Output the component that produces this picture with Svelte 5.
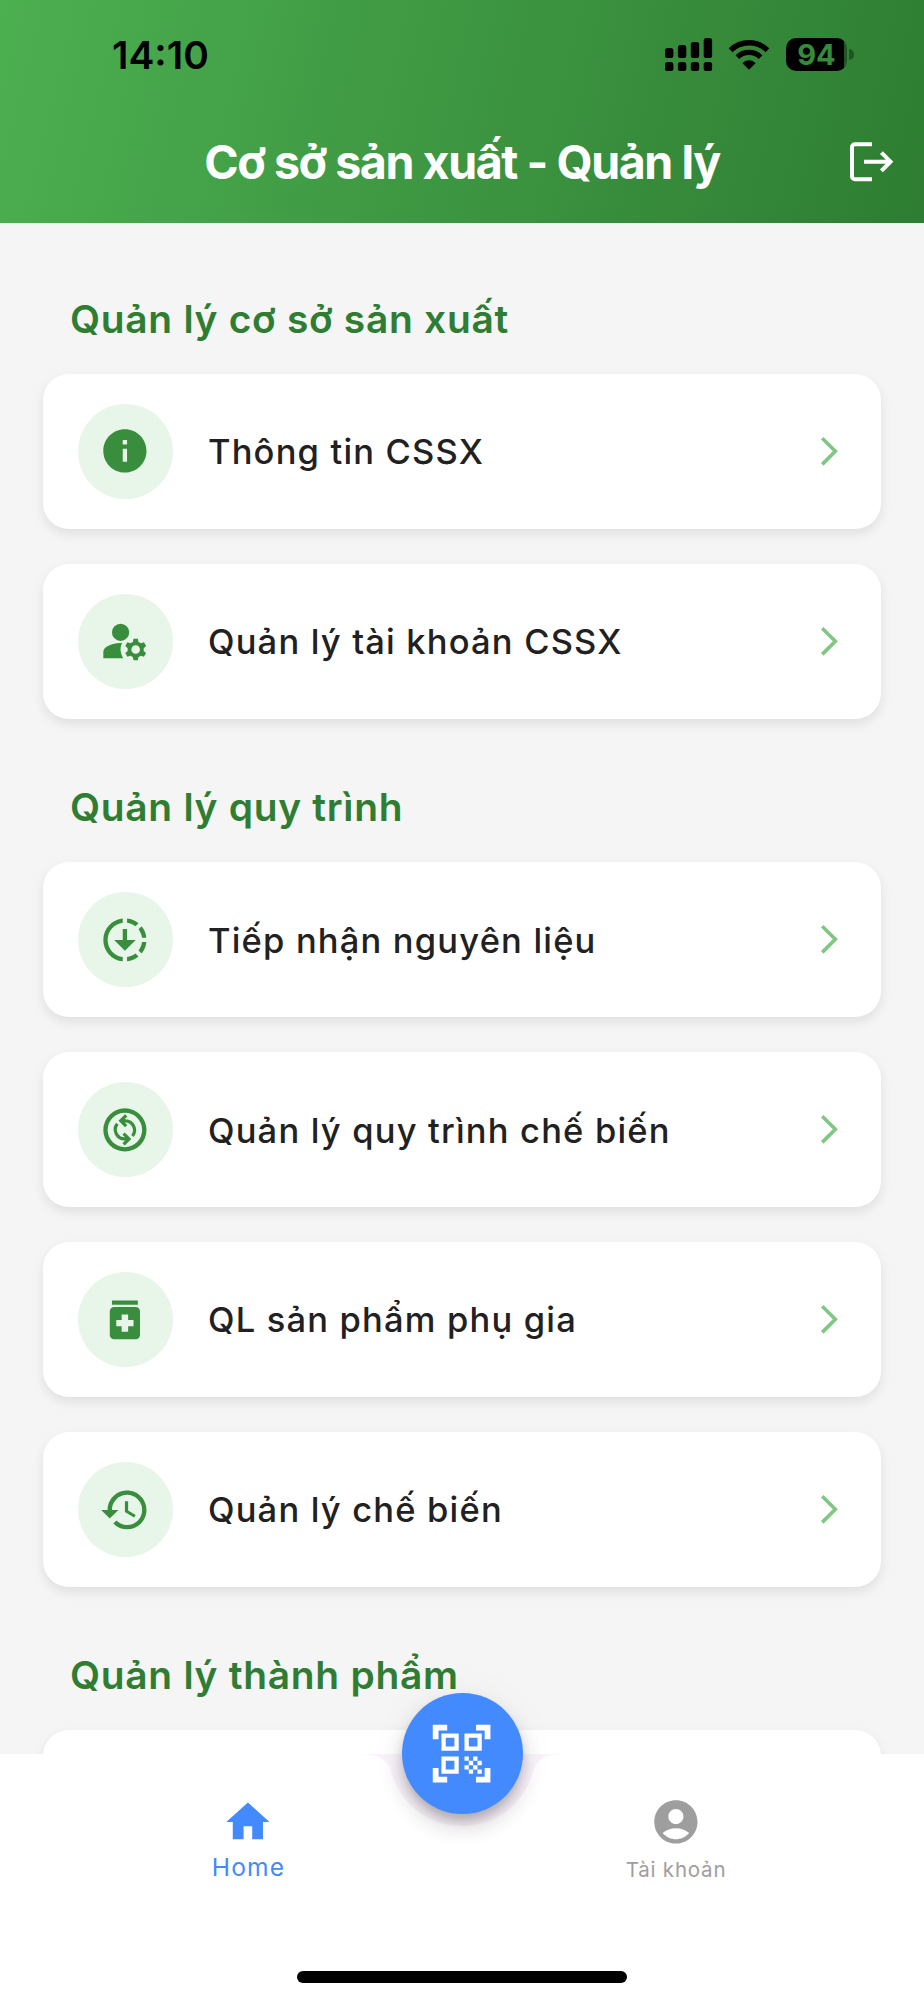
<script>
  const icons = {
    info: 'M12 2C6.48 2 2 6.48 2 12s4.48 10 10 10 10-4.48 10-10S17.52 2 12 2zm1 15h-2v-6h2v6zm0-8h-2V7h2v2z',
    manage:
      'M10 4a4 4 0 1 0 0 8 4 4 0 0 0 0-8zM10.67 13.02C10.45 13.01 10.23 13 10 13c-2.42 0-4.68.67-6.61 1.82C2.51 15.34 2 16.32 2 17.35V20h9.26c-.79-1.13-1.26-2.51-1.26-4 0-1.07.25-2.07.67-2.98zM20.75 16c0-.22-.03-.42-.06-.63l1.14-1.01-1-1.73-1.45.49c-.32-.27-.68-.48-1.08-.63L18 11h-2l-.3 1.49c-.4.15-.76.36-1.08.63l-1.45-.49-1 1.73 1.14 1.01c-.03.21-.06.41-.06.63s.03.42.06.63l-1.14 1.01 1 1.73 1.45-.49c.32.27.68.48 1.08.63L16 21h2l.3-1.49c.4-.15.76-.36 1.08-.63l1.45.49 1-1.73-1.14-1.01c.03-.21.06-.41.06-.63zM17 18c-1.1 0-2-.9-2-2s.9-2 2-2 2 .9 2 2-.9 2-2 2z',
    download:
      'M18.32 4.26C16.84 3.05 15.01 2.25 13 2.05v2.02c1.46.18 2.79.76 3.9 1.62l1.42-1.43zM19.93 11h2.02c-.2-2.01-1-3.84-2.21-5.32L18.31 7.1c.86 1.11 1.44 2.44 1.62 3.9zM18.31 16.9l1.43 1.43c1.21-1.48 2.01-3.32 2.21-5.32h-2.02c-.18 1.45-.76 2.78-1.62 3.89zM13 19.93v2.02c2.01-.2 3.84-1 5.32-2.21l-1.43-1.43c-1.1.86-2.43 1.44-3.89 1.62zM13 12V7h-2v5H7l5 5 5-5h-4zM11 19.93v2.02c-5.05-.5-9-4.76-9-9.95s3.95-9.45 9-9.95v2.02C7.05 4.56 4 7.92 4 12s3.05 7.44 7 7.93z',
    ring: 'M12 4a8 8 0 1 1 0 16 8 8 0 0 1 0-16m0-2a10 10 0 1 0 0 20 10 10 0 0 0 0-20z',
    jar: 'M6 3h12v2H6zM17 6H7c-1.1 0-2 .9-2 2v11c0 1.1.9 2 2 2h10c1.1 0 2-.9 2-2V8c0-1.1-.9-2-2-2zm-1 9h-2.5v2.5h-3V15H8v-3h2.5V9.5h3V12H16z',
    history:
      'M13 3c-4.97 0-9 4.03-9 9H1l3.89 3.89.07.14L9 12H6c0-3.87 3.13-7 7-7s7 3.13 7 7-3.13 7-7 7c-1.93 0-3.68-.79-4.94-2.06l-1.42 1.42C8.27 19.99 10.51 21 13 21c4.97 0 9-4.03 9-9s-4.03-9-9-9zm-1 5v5l4.28 2.54.72-1.21-3.5-2.08V8H12z'
  };

  const sections = [
    {
      title: 'Quản lý cơ sở sản xuất',
      items: [
        { icon: 'info', label: 'Thông tin CSSX' },
        { icon: 'manage', label: 'Quản lý tài khoản CSSX' }
      ]
    },
    {
      title: 'Quản lý quy trình',
      items: [
        { icon: 'download', label: 'Tiếp nhận nguyên liệu' },
        { icon: 'ring', label: 'Quản lý quy trình chế biến' },
        { icon: 'jar', label: 'QL sản phẩm phụ gia' },
        { icon: 'history', label: 'Quản lý chế biến' }
      ]
    },
    { title: 'Quản lý thành phẩm', items: [{ icon: null, label: '' }] }
  ];

  const bars = [10, 13, 16, 20];
</script>

<div class="screen">
  <header>
    <div class="status">
      <span class="time">14:10</span>
      <div class="indicators">
        <svg class="signal" width="48" height="33" viewBox="0 0 48 33">
          {#each bars as h, i}
            <rect x={i * 12.9} y={20 - h} width="8.4" height={h} rx="2.6" />
            <rect x={i * 12.9} y="24" width="8.4" height="9" rx="2.6" />
          {/each}
        </svg>
        <svg class="wifi" width="42" height="32" viewBox="0 0 42 32">
          <path d="M2.6 11.2a26.5 26.5 0 0 1 36.8 0" fill="none" stroke="#000" stroke-width="5.4" />
          <path d="M9.4 18.2a16.6 16.6 0 0 1 23.2 0" fill="none" stroke="#000" stroke-width="5.2" />
          <path d="M21 30.8l-6.6-6.6c3.6-4 9.6-4 13.2 0z" />
        </svg>
        <div class="battery">
          <div class="level">94</div>
          <span class="nub"></span>
        </div>
      </div>
    </div>
    <div class="appbar">
      <h1>Cơ sở sản xuất - Quản lý</h1>
      <svg class="logout" width="44" height="40" viewBox="0 0 44 40" fill="none" stroke="#fff" stroke-width="4">
        <path d="M22 2.2H5a3 3 0 0 0-3 3v29a3 3 0 0 0 3 3h17" />
        <path d="M14 19.7h26M31.4 10.6l9.1 9.1-9.1 9.1" />
      </svg>
    </div>
  </header>

  <main>
    {#each sections as section}
      <section>
        <h2>{section.title}</h2>
        <div class="cards">
          {#each section.items as item}
            <div class="card">
              {#if item.icon}
                <span class="badge">
                  <svg viewBox="0 0 24 24" width="51.8" height="51.8" fill="#388e3c">
                    <path d={icons[item.icon]} />
                    {#if item.icon === 'ring'}
                      <g fill="none" stroke="#388e3c" stroke-width="1.5">
                        <path d="M8.5 9.2A4.3 4.3 0 0 0 12 16.2h1.8M11.4 13.7l2.5 2.5-2.5 2.5" />
                        <path d="M15.5 14.8A4.3 4.3 0 0 0 12 7.8h-1.8M12.6 10.3l-2.5-2.5 2.5-2.5" />
                      </g>
                    {/if}
                  </svg>
                </span>
                <span class="label">{item.label}</span>
                <svg class="chevron" viewBox="0 0 24 24" width="34.5" height="34.5">
                  <path d="M6.23 20.23 8 22l10-10L8 2 6.23 3.77 14.46 12z" />
                </svg>
              {/if}
            </div>
          {/each}
        </div>
      </section>
    {/each}
  </main>

  <nav>
    <svg class="notch" width="216" height="76" viewBox="0 0 216 76">
      <path d="M0 0C26 0 34 4 39 24A73.6 73.6 0 0 0 177 24C182 4 190 0 216 0z" />
    </svg>
    <button class="scan" aria-label="QR">
      <svg viewBox="0 0 24 24" width="69.2" height="69.2" fill="#fff">
        <path d="M9.5 6.5v3h-3v-3h3M11 5H5v6h6V5zm-1.5 9.5v3h-3v-3h3M11 13H5v6h6v-6zm6.5-6.5v3h-3v-3h3M19 5h-6v6h6V5zm-6 8h1.5v1.5H13V13zm1.5 1.5H16V16h-1.5v-1.5zM16 13h1.5v1.5H16V13zm-3 3h1.5v1.5H13V16zm1.5 1.5H16V19h-1.5v-1.5zM16 16h1.5v1.5H16V16zm1.5-1.5H19V16h-1.5v-1.5zm0 3H19V19h-1.5v-1.5zM22 7h-2V4h-3V2h5v5zm0 15v-5h-2v3h-3v2h5zM2 22h5v-2H4v-3H2v5zM2 2v5h2V4h3V2H2z" />
      </svg>
    </button>
    <div class="tabs">
      <div class="tab active">
        <svg viewBox="0 0 24 24" width="51.8" height="51.8"><path d="M10 20v-6h4v6h5v-8h3L12 3 2 12h3v8z" /></svg>
        <span>Home</span>
      </div>
      <div class="tab">
        <svg viewBox="0 0 24 24" width="51.8" height="51.8">
          <path d="M12 2C6.48 2 2 6.48 2 12s4.48 10 10 10 10-4.48 10-10S17.52 2 12 2zm0 4c1.93 0 3.5 1.57 3.5 3.5S13.93 13 12 13s-3.5-1.57-3.5-3.5S10.07 6 12 6zm0 14c-2.03 0-4.43-.82-6.14-2.88C7.55 15.8 9.68 15 12 15s4.45.8 6.14 2.12C16.43 19.18 14.03 20 12 20z" />
        </svg>
        <span>Tài khoản</span>
      </div>
    </div>
    <div class="grabber"></div>
  </nav>
</div>

<style>
  :global(body) {
    margin: 0;
  }
  .screen {
    box-sizing: border-box;
    display: flex;
    flex-direction: column;
    width: 924px;
    height: 2000px;
    overflow: hidden;
    background: #f5f5f5;
    font-family: Inter, 'Noto Sans', sans-serif;
  }
  svg {
    display: block;
    flex: none;
  }
  header {
    flex: none;
    height: 222.6px;
    background: linear-gradient(103.5deg, #4caf50, #2e7d32);
  }
  .status {
    display: flex;
    justify-content: space-between;
    align-items: center;
    height: 109px;
    padding: 0 70.5px 0 112px;
  }
  .time {
    font-size: 38.9px;
    font-weight: 600;
    line-height: 46px;
    letter-spacing: 0;
    color: #000;
    margin-top: 1px;
  }
  .indicators {
    display: flex;
    align-items: center;
  }
  .signal {
    margin-right: 15.3px;
  }
  .wifi {
    margin-right: 15.5px;
  }
  .battery {
    display: flex;
    align-items: center;
    gap: 2px;
  }
  .level {
    width: 61.5px;
    height: 33px;
    border-radius: 10px;
    background: linear-gradient(90deg, #000 58px, rgba(0, 0, 0, 0.35) 58px);
    color: #368b3a;
    font-size: 29px;
    font-weight: 700;
    line-height: 33px;
    text-align: center;
  }
  .nub {
    width: 4.4px;
    height: 11px;
    border-radius: 0 6px 6px 0;
    background: rgba(0, 0, 0, 0.35);
  }
  .appbar {
    display: grid;
    grid-template-columns: 74px 1fr 44px;
    align-items: center;
    height: 106.4px;
    padding: 0 30px 0 0;
  }
  h1 {
    grid-column: 2;
    margin: 0;
    font-size: 46.6px;
    font-weight: 700;
    line-height: 60px;
    letter-spacing: -1.45px;
    text-align: center;
    white-space: nowrap;
    color: #fff;
  }
  main {
    flex: 1;
    min-height: 0;
    overflow: hidden;
    padding: 8.3px 43.2px 0;
  }
  h2 {
    margin: 0;
    padding: 62.9px 0 29.9px 26.8px;
    font-size: 38.9px;
    font-weight: 600;
    line-height: 50px;
    letter-spacing: 0.72px;
    white-space: nowrap;
    color: #2e7d32;
  }
  .cards {
    display: flex;
    flex-direction: column;
    gap: 34.6px;
  }
  .card {
    box-sizing: border-box;
    display: flex;
    align-items: center;
    height: 155.4px;
    padding: 0 34.5px;
    border-radius: 26px;
    background: #fff;
    box-shadow: 0 5px 12px rgba(0, 0, 0, 0.09);
  }
  .badge {
    display: flex;
    align-items: center;
    justify-content: center;
    width: 95px;
    height: 95px;
    border-radius: 50%;
    background: #e8f5e9;
  }
  .label {
    flex: 1;
    margin-left: 35.3px;
    padding-top: 2px;
    font-size: 34.5px;
    font-weight: 500;
    line-height: 48px;
    letter-spacing: 1.18px;
    white-space: nowrap;
    color: #212121;
  }
  .chevron {
    fill: #81c784;
  }
  nav {
    position: relative;
    flex: none;
    box-sizing: border-box;
    display: flex;
    flex-direction: column;
    justify-content: space-between;
    height: 246.4px;
    padding: 42.6px 0 17.4px;
    background: #fff;
  }
  .notch {
    position: absolute;
    left: 354px;
    top: 0;
    fill: #fbf3fc;
  }
  .scan {
    position: absolute;
    left: 401.5px;
    top: -60.5px;
    display: flex;
    align-items: center;
    justify-content: center;
    width: 121px;
    height: 121px;
    padding: 0;
    border: 0;
    border-radius: 50%;
    background: #448aff;
    box-shadow:
      0 7px 11px -2px rgba(0, 0, 0, 0.2),
      0 13px 22px rgba(0, 0, 0, 0.14),
      0 2px 39px rgba(0, 0, 0, 0.05);
  }
  .tabs {
    display: flex;
    justify-content: space-between;
    padding: 0 148px;
  }
  .tab {
    display: flex;
    flex-direction: column;
    align-items: center;
    width: 200px;
    color: #9e9e9e;
    fill: #9e9e9e;
    font-size: 20.5px;
    letter-spacing: 0.8px;
  }
  .tab span {
    line-height: 36px;
    margin-top: 4px;
  }
  .tab.active {
    color: #448aff;
    fill: #448aff;
    font-size: 24.6px;
    letter-spacing: 1.1px;
  }
  .tab.active span {
    margin-top: 1px;
    margin-left: 1px;
  }
  .grabber {
    align-self: center;
    width: 330.5px;
    height: 11.3px;
    border-radius: 6px;
    background: #000;
  }
</style>
